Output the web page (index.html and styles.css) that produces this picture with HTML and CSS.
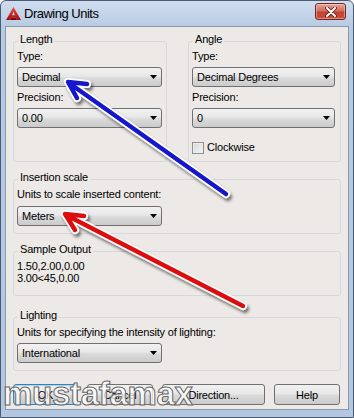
FILE: index.html
```html
<!DOCTYPE html>
<html lang="en">
<head>
  <meta charset="UTF-8">
  <title>Drawing Units</title>
  <link rel="stylesheet" href="styles.css">
</head>
<body>

  <div class="window">
    <div class="titlebar">
      <!-- AutoCAD app icon -->
      <svg class="app-icon" viewBox="0 0 15 13" width="15" height="13">
        <defs>
          <linearGradient id="iconRed" x1="0" y1="0" x2="0" y2="1">
            <stop offset="0" stop-color="#f04a3a"/>
            <stop offset="1" stop-color="#a01010"/>
          </linearGradient>
        </defs>
        <path d="M7.5 0 L15 13 H11 L9.8 10.4 H5.2 L4 13 H0 Z M7.5 4.6 L6.2 8.2 H8.8 Z" fill="url(#iconRed)" fill-rule="evenodd"/>
        <path d="M5.2 10.4 H9.8 L11 13 H4 Z" fill="#7a0a0a"/>
      </svg>
      <span class="title">Drawing Units</span>
      <div class="close-btn">
        <svg viewBox="0 0 12 10" width="12" height="10">
          <path d="M2 1 L10 9 M10 1 L2 9" stroke="#5a1a12" stroke-width="3.6" stroke-linecap="round"/>
          <path d="M2 1 L10 9 M10 1 L2 9" stroke="#fff" stroke-width="2" stroke-linecap="round"/>
        </svg>
      </div>
    </div>

    <div class="client">
      <div class="row">
        <fieldset class="group group-length">
          <legend>Length</legend>
          <div class="label">Type:</div>
          <div class="combo"><span>Decimal</span><svg class="drop" viewBox="0 0 7 4" width="7" height="4"><path d="M0 0 H7 L3.5 4 Z"/></svg></div>
          <div class="label">Precision:</div>
          <div class="combo"><span>0.00</span><svg class="drop" viewBox="0 0 7 4" width="7" height="4"><path d="M0 0 H7 L3.5 4 Z"/></svg></div>
        </fieldset>

        <fieldset class="group group-angle">
          <legend>Angle</legend>
          <div class="label">Type:</div>
          <div class="combo wide"><span>Decimal Degrees</span><svg class="drop" viewBox="0 0 7 4" width="7" height="4"><path d="M0 0 H7 L3.5 4 Z"/></svg></div>
          <div class="label">Precision:</div>
          <div class="combo wide"><span>0</span><svg class="drop" viewBox="0 0 7 4" width="7" height="4"><path d="M0 0 H7 L3.5 4 Z"/></svg></div>
          <label class="check"><span class="check-box"></span>Clockwise</label>
        </fieldset>
      </div>

      <fieldset class="group">
        <legend>Insertion scale</legend>
        <div class="label">Units to scale inserted content:</div>
        <div class="combo combo-gap"><span>Meters</span><svg class="drop" viewBox="0 0 7 4" width="7" height="4"><path d="M0 0 H7 L3.5 4 Z"/></svg></div>
      </fieldset>

      <fieldset class="group sample">
        <legend>Sample Output</legend>
        <div class="sample-line">1.50,2.00,0.00</div>
        <div class="sample-line">3.00&lt;45,0.00</div>
      </fieldset>

      <fieldset class="group">
        <legend>Lighting</legend>
        <div class="label">Units for specifying the intensity of lighting:</div>
        <div class="combo"><span>International</span><svg class="drop" viewBox="0 0 7 4" width="7" height="4"><path d="M0 0 H7 L3.5 4 Z"/></svg></div>
      </fieldset>

      <div class="buttons">
        <div class="btn btn-default">OK</div>
        <div class="btn">Cancel</div>
        <div class="btn btn-direction">Direction...</div>
        <div class="btn">Help</div>
      </div>
    </div>

    <!-- annotation arrows drawn over the dialog -->
    <svg class="arrows" viewBox="0 0 354 418" width="354" height="418">
      <defs>
        <filter id="shadow" x="-20%" y="-20%" width="140%" height="140%">
          <feDropShadow dx="2" dy="3" stdDeviation="1.6" flood-color="#000" flood-opacity="0.5"/>
        </filter>
      </defs>
      <g filter="url(#shadow)" fill="none" stroke-linecap="round" stroke-linejoin="round">
        <path d="M226 194 L69 83 M87 84 L68 82 L77 98" stroke="#fff" stroke-width="8"/>
        <path d="M226 194 L69 83 M87 84 L68 82 L77 98" stroke="#1212cc" stroke-width="4.5"/>
      </g>
      <g filter="url(#shadow)" fill="none" stroke-linecap="round" stroke-linejoin="round">
        <path d="M243 306 L66 215 M84 216 L65 214 L75 230" stroke="#fff" stroke-width="8"/>
        <path d="M243 306 L66 215 M84 216 L65 214 L75 230" stroke="#dd1010" stroke-width="4.5"/>
      </g>
    </svg>

    <div class="watermark">mustafamax</div>
  </div>

</body>
</html>
```

FILE: styles.css
```css
body {
  margin: 0;
  background: #fff;
  font-family: 'Liberation Sans', Arial, sans-serif;
  font-size: 11px;
  letter-spacing: -0.2px;
  color: #000;
}
.window {
  position: relative;
  width: 354px;
  height: 418px;
  box-sizing: border-box;
  border: 1px solid #4a5a70;
  border-radius: 6px 6px 0 0;
  background: linear-gradient(#d0ddef, #b9cbe3 25px, #b4c7e0);
  padding: 0 4px 7px;
  display: flex;
  flex-direction: column;
  overflow: hidden;
}
.titlebar {
  height: 25px;
  display: flex;
  align-items: flex-start;
  flex-shrink: 0;
}
.app-icon {
  margin: 6px 0 0 1px;
}
.title {
  margin: 5px 0 0 3px;
  font-size: 13px;
  line-height: 15px;
  letter-spacing: -0.5px;
}
.close-btn {
  margin: 2px 3px 0 auto;
  width: 31px;
  height: 17px;
  box-sizing: border-box;
  border: 1px solid #6e2a22;
  border-radius: 3px;
  background: linear-gradient(#e6a597, #d0705f 45%, #c4412f 55%, #c9533d);
  box-shadow: inset 0 0 0 1px rgba(255,255,255,0.35);
  display: flex;
  align-items: center;
  justify-content: center;
}
.client {
  flex: 1;
  background: #ece9e6;
  border: 1px solid #8898ae;
  padding: 6px 7px 0;
  display: flex;
  flex-direction: column;
}
.row {
  display: flex;
  gap: 21px;
  margin-bottom: 9px;
}
.group {
  margin: 0;
  min-width: 0;
  padding: 0 3px 7px;
  border: 1px solid #d6d9dc;
  border-radius: 3px;
}
.group legend {
  padding: 0 2px 4px;
  margin-left: 1px;
  line-height: 13px;
}
.group-length {
  width: 154px;
  box-sizing: border-box;
}
.group-angle {
  flex: 1;
}
.client > .group + .group {
  margin-top: 9px;
}
.sample {
  padding-bottom: 11px;
}
.client > .sample + .group {
  margin-top: 13px;
}
.label {
  line-height: 13px;
}
.combo {
  width: 145px;
  height: 20px;
  box-sizing: border-box;
  margin-top: 4px;
  border: 1px solid #707070;
  border-radius: 3px;
  background: linear-gradient(#f1f1f1, #e8e8e8 45%, #dadada 55%, #cbcbcb);
  display: flex;
  align-items: center;
  padding-left: 4px;
}
.combo.wide {
  width: 143px;
}
.combo-gap {
  margin-top: 5px;
}
.combo + .label {
  margin-top: 4px;
}
.drop {
  margin-left: auto;
  margin-right: 4px;
  fill: #000;
}
.check {
  display: flex;
  align-items: center;
  gap: 3px;
  margin-top: 13px;
  line-height: 13px;
}
.check-box {
  width: 12px;
  height: 12px;
  box-sizing: border-box;
  border: 1px solid #8e8f8f;
  background: linear-gradient(135deg, #d4d6d9, #f6f6f6);
  box-shadow: inset 0 0 0 1px #eeeeee;
}
.sample-line {
  line-height: 12px;
}
.buttons {
  display: flex;
  gap: 9px;
  margin-top: 13px;
}
.btn {
  width: 66px;
  height: 21px;
  box-sizing: border-box;
  border: 1px solid #707070;
  border-radius: 3px;
  background: linear-gradient(#f1f1f1, #e8e8e8 45%, #dadada 55%, #cbcbcb);
  display: flex;
  align-items: center;
  justify-content: center;
}
.btn-default {
  width: 65px;
  border-color: #3c7fb1;
  box-shadow: inset 0 0 0 1px #a4d9f3;
}
.btn-direction {
  width: 103px;
}
.arrows {
  position: absolute;
  left: -1px;
  top: -1px;
  pointer-events: none;
}
.watermark {
  position: absolute;
  left: 2px;
  top: 376px;
  font-size: 33px;
  line-height: 33px;
  font-weight: bold;
  letter-spacing: -0.3px;
  color: rgba(255,255,255,0.75);
  -webkit-text-stroke: 1px #666;
}
```
